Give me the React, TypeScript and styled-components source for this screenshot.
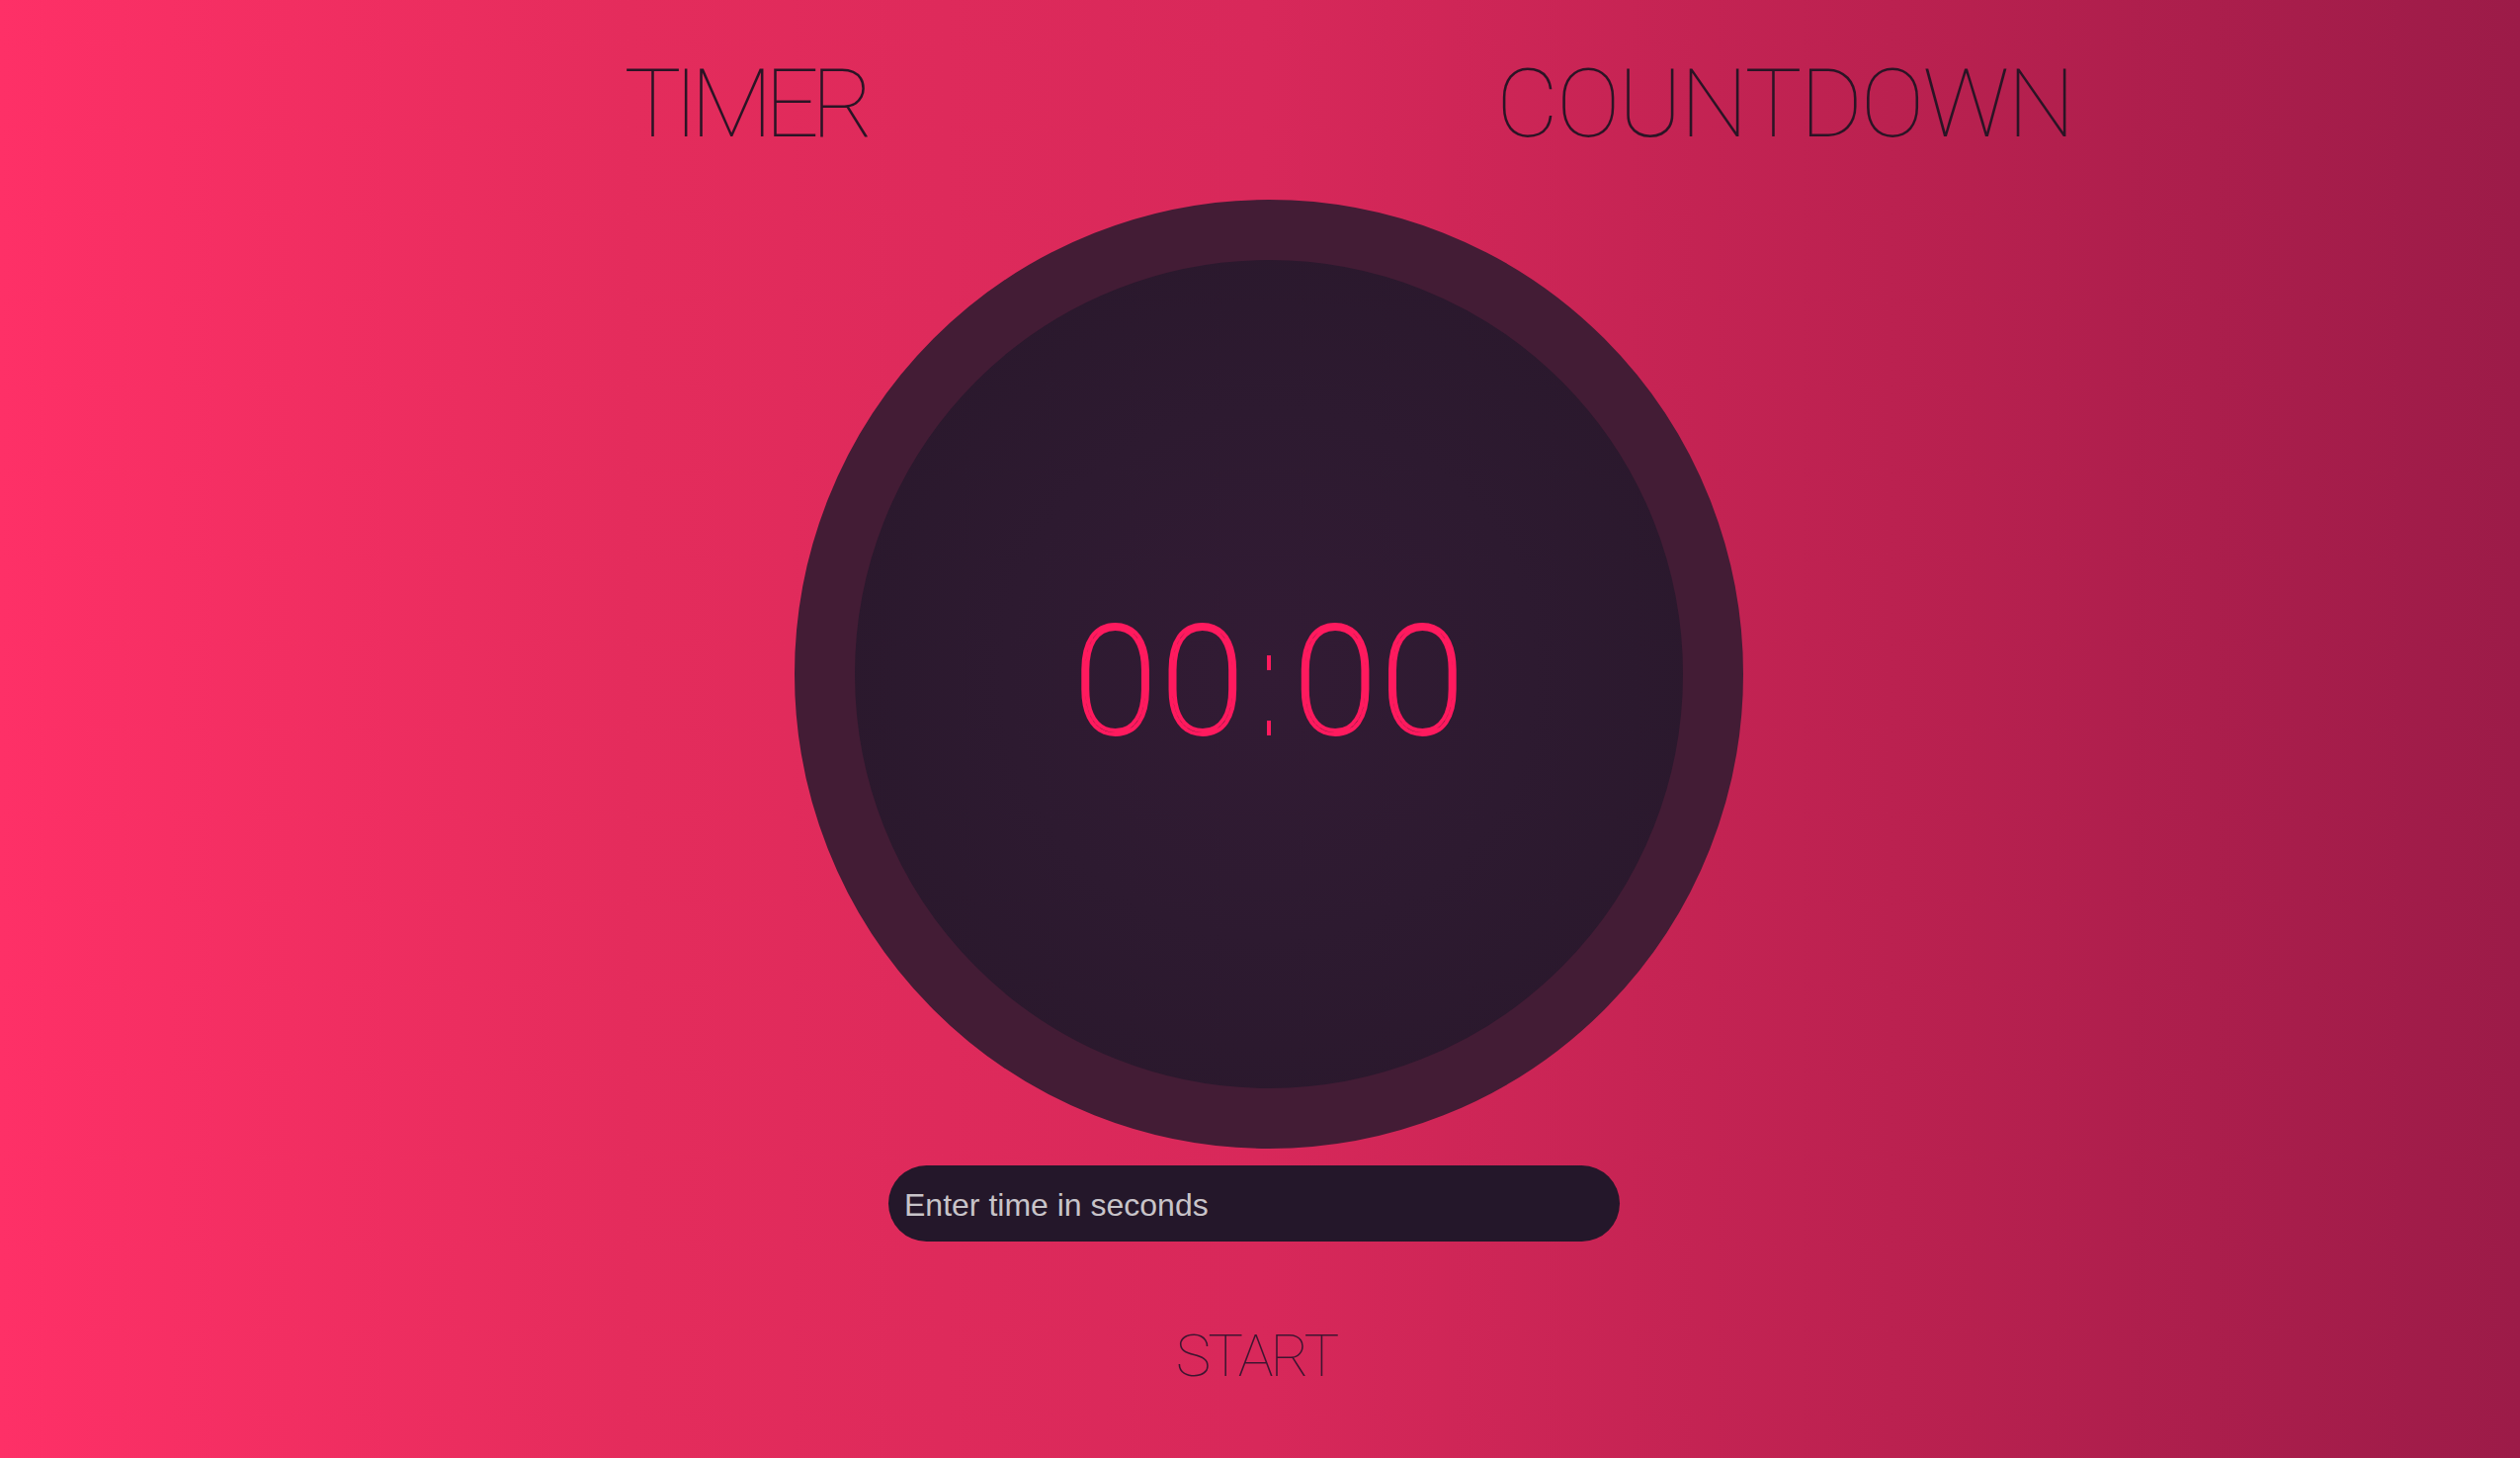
import React from "react";
import styled, { createGlobalStyle } from "styled-components";

const GlobalStyle = createGlobalStyle`
  html, body {
    margin: 0;
    padding: 0;
  }
  body {
    width: 2550px;
    height: 1475px;
    overflow: hidden;
    font-family: Roboto, "Liberation Sans", sans-serif;
  }
`;

const Page = styled.div`
  width: 2550px;
  height: 1475px;
  background: linear-gradient(90deg, #fe3067 0%, #e42c5c 25%, #d8285a 50%, #bb2150 75%, #9c1b48 100%);
  display: flex;
  flex-direction: column;
`;

const Header = styled.header`
  display: flex;
  padding: 57px 0 0 550px;
  gap: 555px;
`;

const Title = styled.div<{ $w: number; $ls: number }>`
  width: ${(p) => p.$w}px;
  text-align: center;
  font-family: Roboto, "Liberation Sans", sans-serif;
  font-weight: 100;
  font-size: 97px;
  line-height: 1;
  letter-spacing: ${(p) => p.$ls}px;
  text-indent: ${(p) => -p.$ls}px;
  color: #2a1425;
  cursor: pointer;
`;

const Main = styled.main`
  display: flex;
  flex-direction: column;
  width: 960px;
  margin: 48px 0 0 804px;
`;

const Dial = styled.div`
  width: 960px;
  height: 960px;
  box-sizing: border-box;
  border-radius: 50%;
  border: 61px solid #431c35;
  background: radial-gradient(circle at center, #321b34 0%, #2d1a30 45%, #28172a 100%);
  display: flex;
  align-items: center;
  justify-content: center;
`;

const Time = styled.div`
  font-family: Roboto, "Liberation Sans", sans-serif;
  font-weight: 100;
  font-size: 152px;
  line-height: 1;
  color: transparent;
  -webkit-text-stroke: 4px #ff1a5e;
  letter-spacing: 5px;
  margin-left: 5px;
  padding-top: 16px;
  white-space: nowrap;
`;

const Colon = styled.span`
  display: inline-block;
  position: relative;
  width: 46px;
  text-align: center;
  -webkit-text-stroke: 0;
  color: transparent;

  &::before,
  &::after {
    content: "";
    position: absolute;
    left: 50%;
    width: 4px;
    height: 15px;
    margin-left: -5px;
    background: #ff1a5e;
  }
  &::before {
    top: 49px;
  }
  &::after {
    top: 115px;
  }
`;

const Input = styled.input`
  width: 740px;
  height: 77px;
  box-sizing: border-box;
  margin: 17px 0 0 95px;
  border: none;
  outline: none;
  border-radius: 39px;
  background: #24172a;
  padding: 3px 0 0 16px;
  font-family: "Liberation Sans", Arial, sans-serif;
  font-size: 32px;
  color: #ececec;
  &::placeholder {
    color: #c8c4c9;
  }
`;

const Start = styled.button`
  align-self: center;
  margin: 86px 26px 0 0;
  background: none;
  border: none;
  padding: 0;
  font-family: Roboto, "Liberation Sans", sans-serif;
  font-weight: 100;
  font-size: 60px;
  line-height: 1;
  letter-spacing: -3px;
  color: #3d1530;
  cursor: pointer;
`;

export default function App() {
  return (
    <>
      <GlobalStyle />
      <Page>
        <Header>
          <Title $w={400} $ls={-8}>TIMER</Title>
          <Title $w={600} $ls={-2}>COUNTDOWN</Title>
        </Header>
        <Main>
          <Dial>
            <Time>
              00<Colon>:</Colon>00
            </Time>
          </Dial>
          <Input type="text" placeholder="Enter time in seconds" />
          <Start>START</Start>
        </Main>
      </Page>
    </>
  );
}
